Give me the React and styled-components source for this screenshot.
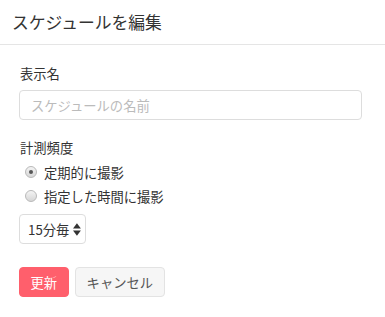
import styled, { createGlobalStyle } from "styled-components";

const GlobalStyle = createGlobalStyle`
  body {
    margin: 0;
    background: #fff;
    font-family: "Noto Sans CJK JP", "Liberation Sans", sans-serif;
    color: #333;
  }
`;

/* MODAL */
const Modal = styled.div`
  width: 385px;
  background: #fff;
`;

const Header = styled.div`
  height: 44px;
  display: flex;
  align-items: center;
  padding: 0 12px;
  border-bottom: 1px solid #e5e5e5;
`;

const Title = styled.h2`
  margin: 0;
  font-size: 16.8px;
  font-weight: 400;
  color: #333;
`;

const Body = styled.div`
  padding: 19px 23px 20px 19px;
  display: flex;
  flex-direction: column;
`;

const Label = styled.div`
  font-size: 13.3px;
  line-height: 20px;
  color: #333;
  margin-bottom: ${(p) => p.$gap || 0}px;
  padding-left: 1px;
`;

const TextInput = styled.input`
  box-sizing: border-box;
  height: 30px;
  width: 100%;
  border: 1px solid #ddd;
  border-radius: 4px;
  padding: 0 11px;
  font-family: inherit;
  font-size: 13.3px;
  color: #333;
  margin-bottom: 18px;
  outline: none;

  &::placeholder {
    color: #bbb;
  }
`;

/* RADIOS */
const RadioRow = styled.label`
  display: flex;
  align-items: center;
  gap: 7px;
  height: 24px;
  padding-left: 6px;
  font-size: 13.3px;
  color: #333;
`;

const RadioDot = styled.span`
  box-sizing: border-box;
  width: 12px;
  height: 12px;
  border-radius: 50%;
  border: 1px solid #b9b9b9;
  background: linear-gradient(#f4f4f4, #d6d6d6);
  display: flex;
  align-items: center;
  justify-content: center;

  &::after {
    content: "";
    width: 4px;
    height: 4px;
    border-radius: 50%;
    background: ${(p) => (p.$checked ? "#555" : "transparent")};
  }
`;

/* SELECT */
const SelectBox = styled.div`
  box-sizing: border-box;
  margin-top: 6px;
  width: 67px;
  height: 30px;
  border: 1px solid #ddd;
  border-radius: 4px;
  display: flex;
  align-items: center;
  padding: 0 4px 0 8px;
  gap: 3px;
`;

const Select = styled.select`
  appearance: none;
  border: none;
  background: transparent;
  font-family: inherit;
  font-size: 13.3px;
  color: #333;
  padding: 0;
  width: 43px;
  outline: none;
`;

/* BUTTONS */
const Actions = styled.div`
  display: flex;
  gap: 6px;
  margin-top: 23px;
`;

const Button = styled.button`
  box-sizing: border-box;
  height: 30px;
  padding: 0 ${(p) => (p.$primary ? 10.5 : 11)}px;
  border-radius: 4px;
  font-family: inherit;
  font-size: 13.3px;
  border: 1px solid ${(p) => (p.$primary ? "#ff5f6c" : "#e3e3e3")};
  background: ${(p) => (p.$primary ? "#ff5f6c" : "#f6f6f6")};
  color: ${(p) => (p.$primary ? "#fff" : "#555")};
  cursor: pointer;
`;

export default function App() {
  return (
    <>
      <GlobalStyle />
      <Modal>
        <Header>
          <Title>スケジュールを編集</Title>
        </Header>
        <Body>
          <Label $gap={6}>表示名</Label>
          <TextInput placeholder="スケジュールの名前" />

          <Label $gap={2}>計測頻度</Label>
          <RadioRow>
            <RadioDot $checked />
            定期的に撮影
          </RadioRow>
          <RadioRow>
            <RadioDot />
            指定した時間に撮影
          </RadioRow>

          <SelectBox>
            <Select defaultValue="15">
              <option value="15">15分毎</option>
              <option value="30">30分毎</option>
              <option value="60">60分毎</option>
            </Select>
            <svg width="8" height="13" viewBox="0 0 8 13">
              <path d="M4 0 L8 5.5 H0 Z" fill="#333" />
              <path d="M0 7.5 H8 L4 13 Z" fill="#333" />
            </svg>
          </SelectBox>

          <Actions>
            <Button $primary>更新</Button>
            <Button>キャンセル</Button>
          </Actions>
        </Body>
      </Modal>
    </>
  );
}
